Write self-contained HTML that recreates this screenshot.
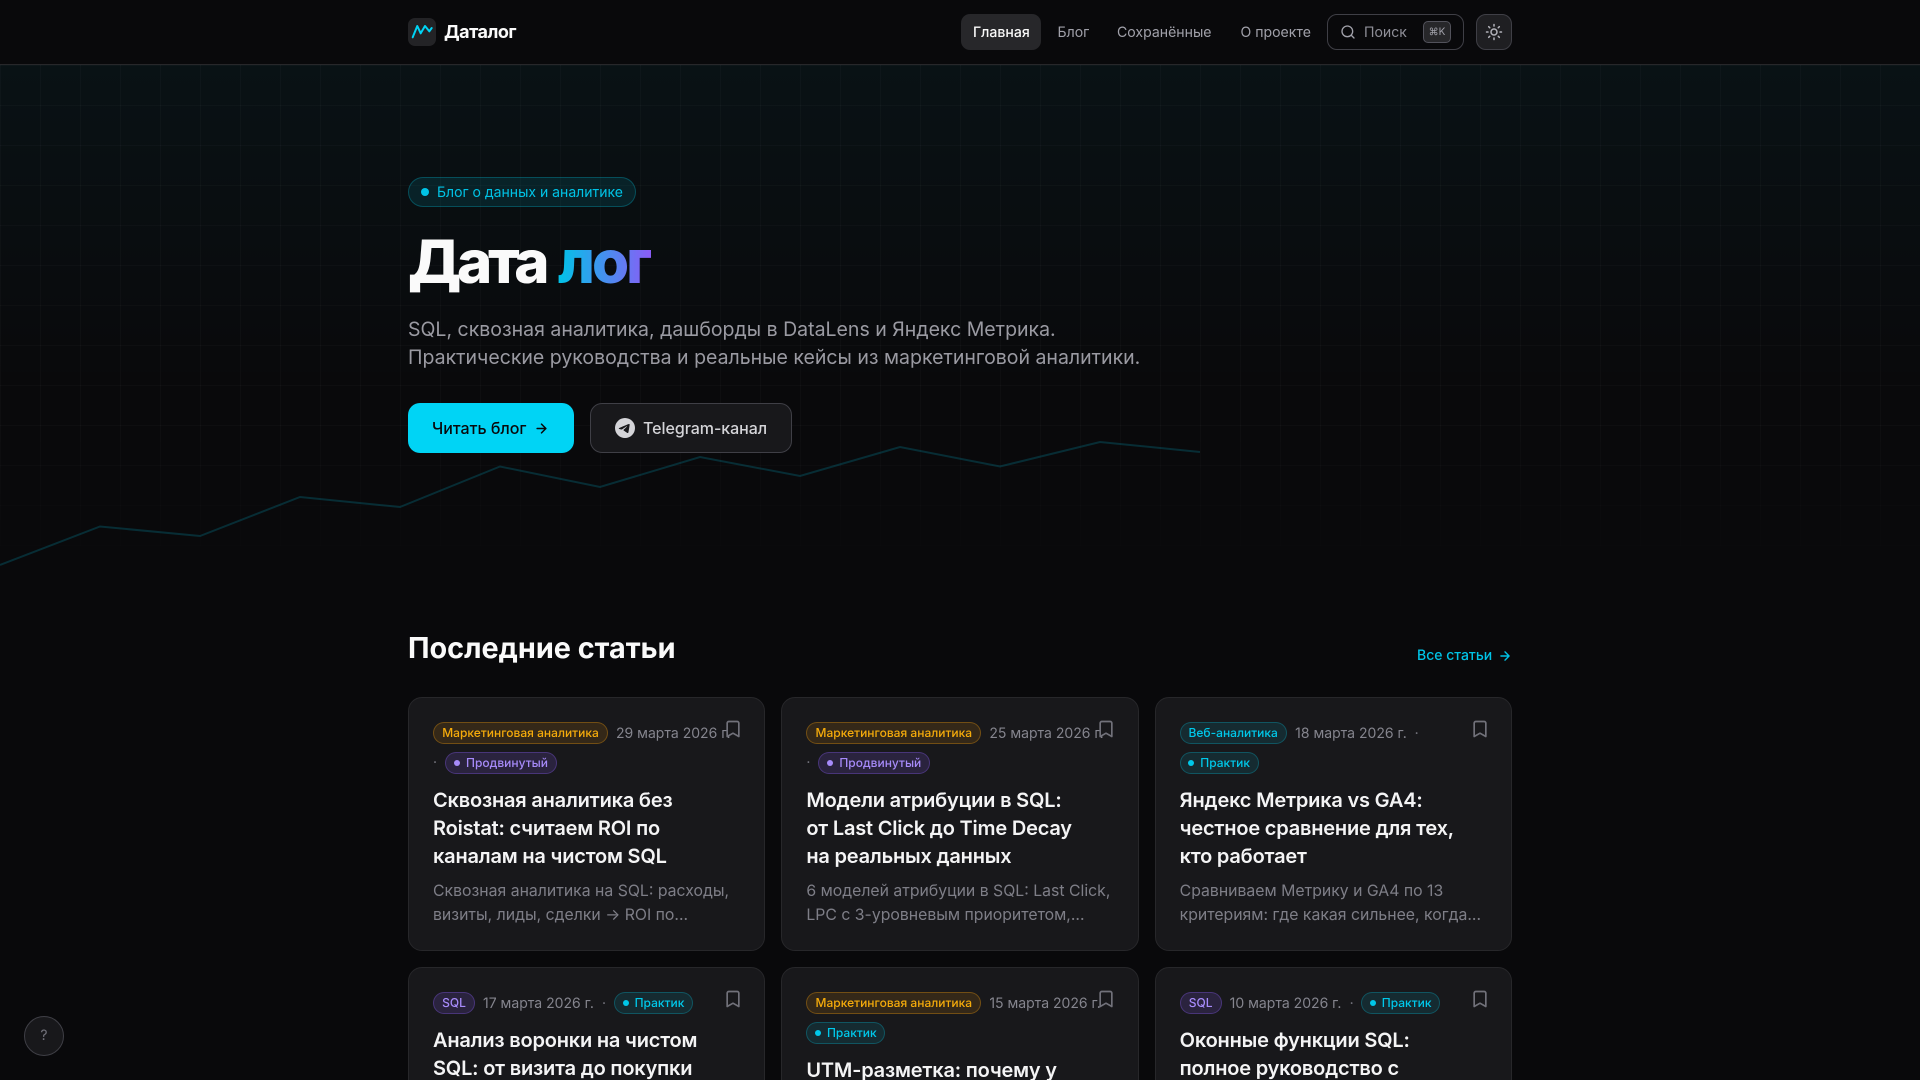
<!DOCTYPE html>
<html lang="ru">
<head>
<meta charset="utf-8">
<title>Даталог</title>
<style>
html,body{margin:0;padding:0;width:1920px;height:1080px;overflow:hidden;background:#09090b;}
body{position:relative;font-family:Inter,"Liberation Sans","Noto Sans CJK SC",sans-serif;color:#fafafa;}
a{color:inherit;text-decoration:none}
.t{position:absolute;white-space:nowrap;}
header{position:absolute;left:0;top:0;width:1920px;height:64px;background:#09090b;border-bottom:1px solid #27272a;z-index:3}
.logo{position:absolute;left:408px;top:18px;width:28px;height:28px;border-radius:7px;background:#232326}
.brand{left:444px;top:20.5px;line-height:24px;font-size:18px;font-weight:700;letter-spacing:-.5px}
.nav{top:20.5px;line-height:24px;font-size:14.08px;color:#a1a1aa}
.pill-nav{position:absolute;left:961px;top:14px;width:80px;height:36px;border-radius:9px;background:#27272a}
.search{position:absolute;left:1327px;top:14px;width:135px;height:34px;border:1px solid #3f3f46;border-radius:10px}
.kbd{position:absolute;left:1423px;top:21px;width:26px;height:20px;border:1px solid #52525b;border-radius:5px;background:#27272a;color:#a1a1aa;font-size:10px;line-height:20px;text-align:center}
.theme{position:absolute;left:1476px;top:14px;width:34px;height:34px;border:1px solid #3f3f46;border-radius:10px;background:#1f1f22}
.hero{position:absolute;left:0;top:65px;width:1920px;height:520px;background:linear-gradient(180deg,rgba(0,212,245,.045),rgba(0,212,245,0) 62%);overflow:hidden}
.grid{position:absolute;inset:0;background-image:linear-gradient(rgba(255,255,255,.022) 1px,transparent 1px),linear-gradient(90deg,rgba(255,255,255,.022) 1px,transparent 1px);background-size:40px 40px;background-position:0 0;-webkit-mask-image:linear-gradient(180deg,#000 70%,transparent 100%);mask-image:linear-gradient(180deg,#000 70%,transparent 100%)}
.chart{position:absolute;left:0;top:-65px}
.badge{position:absolute;left:408px;top:177px;width:226px;height:28px;border:1px solid rgba(0,212,245,.25);background:rgba(0,212,245,.1);border-radius:15px}
.badge i{position:absolute;left:12px;top:10px;width:8px;height:8px;border-radius:50%;background:#00c3e6}
.h1{top:224px;font-size:60px;line-height:76px;font-weight:800;margin:0}
.grad{background:linear-gradient(90deg,#00c4e8,#8b5cf6);-webkit-background-clip:text;background-clip:text;color:transparent}
.sub{left:408px;font-size:19.5px;line-height:28px;color:#9a9aa2}
.btn1{position:absolute;left:408px;top:403px;width:166px;height:50px;border-radius:12px;background:#00d4f5}
.btn2{position:absolute;left:590px;top:403px;width:200px;height:48px;border:1px solid #3f3f46;border-radius:12px;background:#18181b}
.h2{left:408px;top:627.5px;font-size:28.8px;line-height:40px;font-weight:700}
.all{left:1417px;top:645.5px;font-size:14px;line-height:20px;color:#00c3e6;font-weight:500}
.card{position:absolute;width:355.33px;height:252px;background:#18181b;border:1px solid #27272a;border-radius:14px;box-sizing:content-box}
.pill{position:absolute;height:20px;line-height:20px;border-radius:12px;font-size:12px;text-align:center;font-weight:500;border:1px solid;white-space:nowrap;box-sizing:content-box}
.amb{color:#f5ab0b;background:rgba(245,158,11,.13);border-color:rgba(245,158,11,.32)}
.vio{color:#a78bfa;background:rgba(139,92,246,.16);border-color:rgba(139,92,246,.32)}
.cya{color:#00c8ea;background:rgba(0,212,245,.1);border-color:rgba(0,212,245,.25)}
.pill i{display:inline-block;width:6px;height:6px;border-radius:50%;background:currentColor;margin-right:6px;vertical-align:1px}
.date{top:25px;line-height:22px;font-size:14px;color:#85858e}
.dot{font-size:14px;color:#71717a;line-height:22px}
.bm{position:absolute;top:21px;left:314px}
.title{left:24px;font-size:20px;line-height:28px;font-weight:600;color:#f4f4f5;letter-spacing:-.2px}
.ex{left:24px;top:180.5px;font-size:15.8px;line-height:24px;color:#7e7e87}
.help{position:absolute;left:24px;top:1016px;width:38px;height:38px;border:1px solid #3f3f46;border-radius:50%;background:#18181b;color:#71717a;text-align:center;line-height:38px;font-size:14px;z-index:4}
</style>
</head>
<body>
<div class="hero">
  <div class="grid"></div>
  <svg class="chart" width="1920" height="600" fill="none"><polyline points="0,565 100,526.5 200,536 300,497 400,507 500,466.5 600,487 700,457 800,476 900,447 1000,466.5 1100,442 1200,452" stroke="#00d4f5" stroke-opacity=".18" stroke-width="2"/></svg>
</div>

<header>
  <div class="logo"></div>
  <svg class="t" style="left:408px;top:18px" width="28" height="28" fill="none"><polyline points="4.7,19.3 9.3,8 12.7,15.3 17,8 21.3,13.3 23.7,10" stroke="#00d4f5" stroke-width="2" stroke-linejoin="round" stroke-linecap="round"/></svg>
  <a class="t brand">Даталог</a>
  <div class="pill-nav"></div>
  <a class="t nav" style="left:973px;color:#fafafa;font-weight:500">Главная</a>
  <a class="t nav" style="left:1057.5px">Блог</a>
  <a class="t nav" style="left:1117px">Сохранённые</a>
  <a class="t nav" style="left:1240.5px">О проекте</a>
  <div class="search"></div>
  <svg class="t" style="left:1340px;top:24px" width="16" height="16" viewBox="0 0 24 24" fill="none" stroke="#a1a1aa" stroke-width="2" stroke-linecap="round"><circle cx="11" cy="11" r="8"/><path d="m21 21-4.3-4.3"/></svg>
  <span class="t nav" style="left:1364px;color:#8f8f98">Поиск</span>
  <div class="kbd">⌘K</div>
  <div class="theme"></div>
  <svg class="t" style="left:1485px;top:23px" width="18" height="18" viewBox="0 0 24 24" fill="none" stroke="#b4b4bb" stroke-width="2" stroke-linecap="round"><circle cx="12" cy="12" r="4"/><path d="M12 2v2M12 20v2M4.93 4.93l1.41 1.41M17.66 17.66l1.41 1.41M2 12h2M20 12h2M6.34 17.66l-1.41 1.41M19.07 4.93l-1.41 1.41"/></svg>
</header>

<div class="badge"><i></i></div>
<span class="t" style="left:437px;top:182.5px;font-size:14px;line-height:20px;color:#00c3e6">Блог о данных и аналитике</span>
<h1 class="t h1" style="left:408px;letter-spacing:-4.3px">Дата</h1>
<span class="t h1 grad" style="left:558px;letter-spacing:-3px">лог</span>
<span class="t sub" style="top:315px">SQL, сквозная аналитика, дашборды в DataLens и Яндекс Метрика.</span>
<span class="t sub" style="top:343px">Практические руководства и реальные кейсы из маркетинговой аналитики.</span>

<a class="btn1"></a>
<span class="t" style="left:432px;top:418px;font-size:16px;line-height:20px;font-weight:500;color:#09090b">Читать блог</span>
<svg class="t" style="left:534px;top:420.5px" width="15" height="15" viewBox="0 0 24 24" fill="none" stroke="#09090b" stroke-width="2.4" stroke-linecap="round" stroke-linejoin="round"><path d="M5 12h14M12 5l7 7-7 7"/></svg>
<a class="btn2"></a>
<svg class="t" style="left:615px;top:418px" width="20" height="20" viewBox="0 0 24 24" fill="#d4d4d8"><path d="M11.944 0A12 12 0 0 0 0 12a12 12 0 0 0 12 12 12 12 0 0 0 12-12A12 12 0 0 0 12 0a12 12 0 0 0-.056 0zm4.962 7.224c.1-.002.321.023.465.14a.506.506 0 0 1 .171.325c.016.093.036.306.02.472-.18 1.898-.962 6.502-1.36 8.627-.168.9-.499 1.201-.82 1.23-.696.065-1.225-.46-1.9-.902-1.056-.693-1.653-1.124-2.678-1.8-1.185-.78-.417-1.21.258-1.91.177-.184 3.247-2.977 3.307-3.23.007-.032.014-.15-.056-.212s-.174-.041-.249-.024c-.106.024-1.793 1.14-5.061 3.345-.48.33-.913.49-1.302.48-.428-.008-1.252-.241-1.865-.44-.752-.245-1.349-.374-1.297-.789.027-.216.325-.437.893-.663 3.498-1.524 5.83-2.529 6.998-3.014 3.332-1.386 4.025-1.627 4.476-1.635z"/></svg>
<span class="t" style="left:643px;top:418px;font-size:16px;line-height:20px;font-weight:500;color:#d4d4d8;letter-spacing:-.05px">Telegram-канал</span>

<h2 class="t h2" style="margin:0">Последние статьи</h2>
<a class="t all">Все статьи</a>
<svg class="t" style="left:1497.5px;top:648.5px" width="14" height="14" viewBox="0 0 24 24" fill="none" stroke="#00c3e6" stroke-width="2.4" stroke-linecap="round" stroke-linejoin="round"><path d="M5 12h14M12 5l7 7-7 7"/></svg>

<!-- Row 1 -->
<article class="card" style="left:408px;top:697px">
  <span class="pill amb" style="left:24px;top:24px;width:173px">Маркетинговая аналитика</span>
  <span class="t date" style="left:207px">29 марта 2026 г.</span>
  <svg class="bm" width="20" height="20" viewBox="0 0 24 24" fill="none" stroke="#71717a" stroke-width="2" stroke-linejoin="round"><path d="m19 21-7-4-7 4V5a2 2 0 0 1 2-2h10a2 2 0 0 1 2 2v16z"/></svg>
  <span class="t dot" style="left:24px;top:54px">·</span>
  <span class="pill vio" style="left:36px;top:54px;width:110px"><i></i>Продвинутый</span>
  <div class="t title" style="top:88px">Сквозная аналитика без<br>Roistat: считаем ROI по<br>каналам на чистом SQL</div>
  <div class="t ex">Сквозная аналитика на SQL: расходы,<br>визиты, лиды, сделки → ROI по...</div>
</article>
<article class="card" style="left:781.33px;top:697px">
  <span class="pill amb" style="left:24px;top:24px;width:173px">Маркетинговая аналитика</span>
  <span class="t date" style="left:207px">25 марта 2026 г.</span>
  <svg class="bm" width="20" height="20" viewBox="0 0 24 24" fill="none" stroke="#71717a" stroke-width="2" stroke-linejoin="round"><path d="m19 21-7-4-7 4V5a2 2 0 0 1 2-2h10a2 2 0 0 1 2 2v16z"/></svg>
  <span class="t dot" style="left:24px;top:54px">·</span>
  <span class="pill vio" style="left:36px;top:54px;width:110px"><i></i>Продвинутый</span>
  <div class="t title" style="top:88px">Модели атрибуции в SQL:<br>от Last Click до Time Decay<br>на реальных данных</div>
  <div class="t ex">6 моделей атрибуции в SQL: Last Click,<br>LPC с 3-уровневым приоритетом,...</div>
</article>
<article class="card" style="left:1154.67px;top:697px">
  <span class="pill cya" style="left:24px;top:24px;width:105px">Веб-аналитика</span>
  <span class="t date" style="left:139.5px">18 марта 2026 г.</span>
  <span class="t dot" style="left:259px;top:25px">·</span>
  <svg class="bm" width="20" height="20" viewBox="0 0 24 24" fill="none" stroke="#71717a" stroke-width="2" stroke-linejoin="round"><path d="m19 21-7-4-7 4V5a2 2 0 0 1 2-2h10a2 2 0 0 1 2 2v16z"/></svg>
  <span class="pill cya" style="left:24px;top:54px;width:77px"><i></i>Практик</span>
  <div class="t title" style="top:88px">Яндекс Метрика vs GA4:<br>честное сравнение для тех,<br>кто работает</div>
  <div class="t ex">Сравниваем Метрику и GA4 по 13<br>критериям: где какая сильнее, когда...</div>
</article>

<!-- Row 2 -->
<article class="card" style="left:408px;top:967px">
  <span class="pill vio" style="left:24px;top:24px;width:40px">SQL</span>
  <span class="t date" style="left:74px">17 марта 2026 г.</span>
  <span class="t dot" style="left:193px;top:25px">·</span>
  <span class="pill cya" style="left:205px;top:24px;width:77px"><i></i>Практик</span>
  <svg class="bm" width="20" height="20" viewBox="0 0 24 24" fill="none" stroke="#71717a" stroke-width="2" stroke-linejoin="round"><path d="m19 21-7-4-7 4V5a2 2 0 0 1 2-2h10a2 2 0 0 1 2 2v16z"/></svg>
  <div class="t title" style="top:58px">Анализ воронки на чистом<br>SQL: от визита до покупки</div>
</article>
<article class="card" style="left:781.33px;top:967px">
  <span class="pill amb" style="left:24px;top:24px;width:173px">Маркетинговая аналитика</span>
  <span class="t date" style="left:207px">15 марта 2026 г.</span>
  <svg class="bm" width="20" height="20" viewBox="0 0 24 24" fill="none" stroke="#71717a" stroke-width="2" stroke-linejoin="round"><path d="m19 21-7-4-7 4V5a2 2 0 0 1 2-2h10a2 2 0 0 1 2 2v16z"/></svg>
  <span class="pill cya" style="left:24px;top:54px;width:77px"><i></i>Практик</span>
  <div class="t title" style="top:88px">UTM-разметка: почему у</div>
</article>
<article class="card" style="left:1154.67px;top:967px">
  <span class="pill vio" style="left:24px;top:24px;width:40px">SQL</span>
  <span class="t date" style="left:74px">10 марта 2026 г.</span>
  <span class="t dot" style="left:194px;top:25px">·</span>
  <span class="pill cya" style="left:205.5px;top:24px;width:77px"><i></i>Практик</span>
  <svg class="bm" width="20" height="20" viewBox="0 0 24 24" fill="none" stroke="#71717a" stroke-width="2" stroke-linejoin="round"><path d="m19 21-7-4-7 4V5a2 2 0 0 1 2-2h10a2 2 0 0 1 2 2v16z"/></svg>
  <div class="t title" style="top:58px">Оконные функции SQL:<br>полное руководство с</div>
</article>

<div class="help">?</div>
</body>
</html>
